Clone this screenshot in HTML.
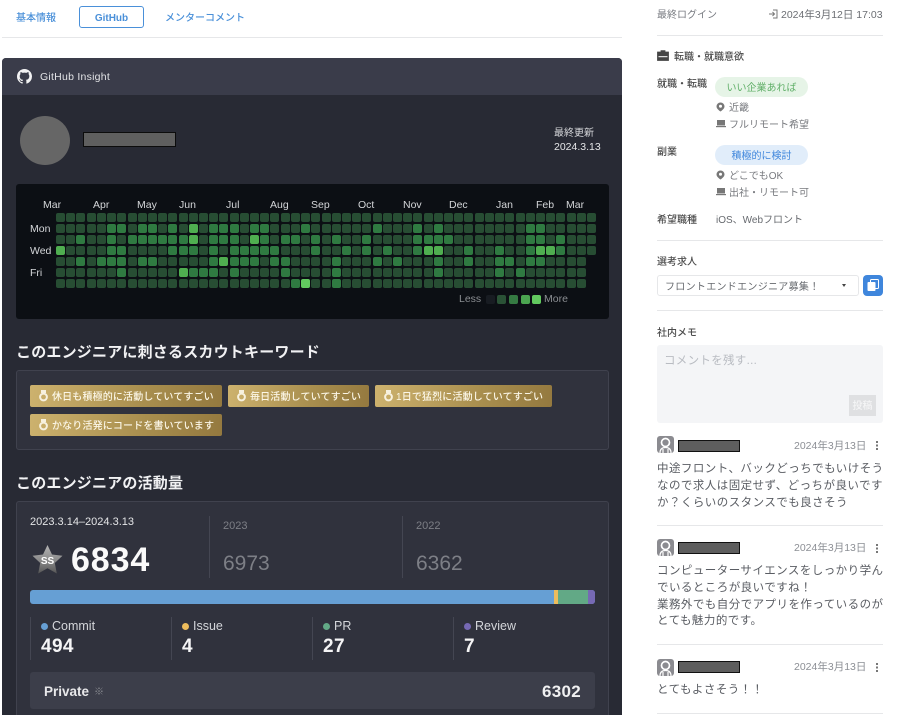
<!DOCTYPE html>
<html lang="ja">
<head>
<meta charset="utf-8">
<title>GitHub Insight</title>
<style>
html,body{margin:0;padding:0;background:#fff;}
body{width:902px;height:716px;position:relative;overflow:hidden;font-family:"Liberation Sans","Noto Sans CJK JP",sans-serif;color:#555;filter:blur(.3px);}
.a{position:absolute;white-space:nowrap;}
.hr{position:absolute;height:1px;background:#e6e7e9;}
.badge{position:absolute;height:22px;border-radius:2px;background:linear-gradient(100deg,#cdb26e,#a88e4e 60%,#94793f);color:#fbf6e6;font-size:10px;line-height:25px;letter-spacing:.15px;white-space:nowrap;font-weight:500;}
.badge svg{position:absolute;left:9px;top:5px;}
.badge span{position:absolute;left:22px;top:0;}
.cell{position:absolute;width:9px;height:9px;border-radius:2px;}
.mon{position:absolute;top:199px;font-size:10.5px;color:#d4d6d9;}
.day{position:absolute;left:30px;font-size:10.5px;color:#d4d6d9;}
.vl{position:absolute;width:1px;background:#444652;}
.dot{position:absolute;width:7px;height:7px;border-radius:50%;}
.lab{position:absolute;font-size:12.5px;color:#d4d6da;}
.num{position:absolute;font-size:19px;letter-spacing:.4px;font-weight:bold;color:#f5f5f6;line-height:20px;}
.av{position:absolute;left:657px;width:17px;height:17px;}
.red{position:absolute;left:678px;width:60px;height:10px;background:#5e5e5e;border:1px solid #111;box-sizing:content-box;}
.dt{position:absolute;left:794px;font-size:10.5px;color:#8c8f95;white-space:nowrap;}
.cm{position:absolute;left:657px;font-size:11.5px;line-height:16.8px;color:#5a5d63;letter-spacing:.45px;white-space:nowrap;}
.k{position:absolute;left:657px;font-size:10px;font-weight:500;color:#4c4c4c;white-space:nowrap;}
.s{position:absolute;left:729px;font-size:10px;color:#77797e;white-space:nowrap;}
.ic{position:absolute;left:716px;}
</style>
</head>
<body>
<!-- tabs -->
<div class="a" style="left:16px;top:9px;font-size:10px;color:#4a90d9;font-weight:500;">基本情報</div>
<div class="a" style="left:79px;top:6px;width:63px;height:20px;border:1px solid #4a90d9;border-radius:3px;text-align:center;line-height:23px;font-size:10px;font-weight:bold;color:#4a90d9;">GitHub</div>
<div class="a" style="left:165px;top:9px;font-size:10px;color:#4a90d9;font-weight:500;">メンターコメント</div>
<div class="hr" style="left:2px;top:37px;width:620px;"></div>

<!-- dark panel -->
<div class="a" style="left:2px;top:58px;width:620px;height:657px;background:#282a34;border-radius:4px 4px 0 0;"></div>
<div class="a" style="left:2px;top:58px;width:620px;height:37px;background:#3a3c4a;border-radius:4px 4px 0 0;"></div>
<svg class="a" style="left:17px;top:69px;" width="15" height="15" viewBox="0 0 16 16"><path fill="#f2f2f3" d="M8 0C3.58 0 0 3.58 0 8c0 3.54 2.29 6.53 5.47 7.59.4.07.55-.17.55-.38 0-.19-.01-.82-.01-1.49-2.01.37-2.53-.49-2.69-.94-.09-.23-.48-.94-.82-1.13-.28-.15-.68-.52-.01-.53.63-.01 1.08.58 1.23.82.72 1.21 1.87.87 2.33.66.07-.52.28-.87.51-1.07-1.78-.2-3.64-.89-3.64-3.95 0-.87.31-1.59.82-2.15-.08-.2-.36-1.02.08-2.12 0 0 .67-.21 2.2.82.64-.18 1.32-.27 2-.27s1.36.09 2 .27c1.53-1.04 2.2-.82 2.2-.82.44 1.1.16 1.92.08 2.12.51.56.82 1.27.82 2.15 0 3.07-1.87 3.75-3.65 3.95.29.25.54.73.54 1.48 0 1.07-.01 1.93-.01 2.2 0 .21.15.46.55.38A8.01 8.01 0 0016 8c0-4.42-3.58-8-8-8z"/></svg>
<div class="a" style="left:40px;top:71px;font-size:10.5px;color:#e2e3e6;letter-spacing:.25px;">GitHub Insight</div>

<div class="a" style="left:20px;top:116px;width:50px;height:49px;border-radius:50%;background:#666;"></div>
<div class="a" style="left:83px;top:132px;width:93px;height:15px;background:#5f5f5f;border:1px solid #0c0c0c;box-sizing:border-box;"></div>
<div class="a" style="left:554px;top:124px;font-size:10px;color:#d8d9dc;">最終更新</div>
<div class="a" style="left:554px;top:141px;font-size:10.5px;color:#e4e5e7;">2024.3.13</div>

<!-- heatmap -->
<div class="a" style="left:16px;top:184px;width:593px;height:135px;background:#0c0f14;border-radius:3px;"></div>
<div class="mon" style="left:43px;">Mar</div>
<div class="mon" style="left:93px;">Apr</div>
<div class="mon" style="left:137px;">May</div>
<div class="mon" style="left:179px;">Jun</div>
<div class="mon" style="left:226px;">Jul</div>
<div class="mon" style="left:270px;">Aug</div>
<div class="mon" style="left:311px;">Sep</div>
<div class="mon" style="left:358px;">Oct</div>
<div class="mon" style="left:403px;">Nov</div>
<div class="mon" style="left:449px;">Dec</div>
<div class="mon" style="left:496px;">Jan</div>
<div class="mon" style="left:536px;">Feb</div>
<div class="mon" style="left:566px;">Mar</div>
<div class="day" style="top:223px;">Mon</div>
<div class="day" style="top:245px;">Wed</div>
<div class="day" style="top:267px;">Fri</div>
<div id="hm"></div>
<div class="a" style="left:459px;top:293px;font-size:10.5px;color:#8b8e92;">Less</div>
<div class="cell" style="left:486px;top:295px;background:#181c22;"></div>
<div class="cell" style="left:497px;top:295px;background:#2a5236;"></div>
<div class="cell" style="left:509px;top:295px;background:#357a42;"></div>
<div class="cell" style="left:521px;top:295px;background:#4ba550;"></div>
<div class="cell" style="left:532px;top:295px;background:#62c95f;"></div>
<div class="a" style="left:544px;top:293px;font-size:10.5px;color:#8b8e92;">More</div>

<!-- keywords -->
<div class="a" style="left:16px;top:341px;font-size:15px;font-weight:bold;color:#f1f1f3;letter-spacing:.2px;">このエンジニアに刺さるスカウトキーワード</div>
<div class="a" style="left:16px;top:370px;width:593px;height:80px;background:#30323d;border:1px solid #40424e;border-radius:3px;box-sizing:border-box;"></div>
<div class="badge" style="left:30px;top:385px;width:192px;"><svg width="9" height="12" viewBox="0 0 9 12"><rect x="2" y="0" width="5" height="3" fill="#f7f1df"/><circle cx="4.5" cy="7" r="3.4" fill="none" stroke="#f7f1df" stroke-width="2"/></svg><span>休日も積極的に活動していてすごい</span></div>
<div class="badge" style="left:228px;top:385px;width:141px;"><svg width="9" height="12" viewBox="0 0 9 12"><rect x="2" y="0" width="5" height="3" fill="#f7f1df"/><circle cx="4.5" cy="7" r="3.4" fill="none" stroke="#f7f1df" stroke-width="2"/></svg><span>毎日活動していてすごい</span></div>
<div class="badge" style="left:375px;top:385px;width:177px;"><svg width="9" height="12" viewBox="0 0 9 12"><rect x="2" y="0" width="5" height="3" fill="#f7f1df"/><circle cx="4.5" cy="7" r="3.4" fill="none" stroke="#f7f1df" stroke-width="2"/></svg><span style="left:21px;">1日で猛烈に活動していてすごい</span></div>
<div class="badge" style="left:30px;top:414px;width:192px;"><svg width="9" height="12" viewBox="0 0 9 12"><rect x="2" y="0" width="5" height="3" fill="#f7f1df"/><circle cx="4.5" cy="7" r="3.4" fill="none" stroke="#f7f1df" stroke-width="2"/></svg><span>かなり活発にコードを書いています</span></div>

<!-- activity -->
<div class="a" style="left:16px;top:472px;font-size:15px;font-weight:bold;color:#f1f1f3;letter-spacing:.2px;">このエンジニアの活動量</div>
<div class="a" style="left:16px;top:501px;width:593px;height:214px;background:#30323d;border:1px solid #40424e;border-bottom:0;border-radius:3px 3px 0 0;box-sizing:border-box;"></div>
<div class="a" style="left:30px;top:516px;font-size:11px;color:#e4e5e7;">2023.3.14–2024.3.13</div>
<svg class="a" style="left:32px;top:544px;" width="31" height="30" viewBox="0 0 31 30"><defs><linearGradient id="g" x1="0" y1="0" x2="0" y2="1"><stop offset="0" stop-color="#b5b5b5"/><stop offset=".55" stop-color="#8a8a8a"/><stop offset="1" stop-color="#555"/></linearGradient></defs><polygon points="15.5,1 20,10.5 30.5,11.8 22.8,19 24.8,29.5 15.5,24.3 6.2,29.5 8.2,19 .5,11.8 11,10.5" fill="url(#g)"/><text x="15.5" y="20" text-anchor="middle" font-family="Liberation Sans" font-size="10" font-weight="bold" fill="#fff">SS</text></svg>
<div class="a" style="left:71px;top:542px;font-size:34px;line-height:36px;font-weight:bold;color:#fafafa;letter-spacing:.9px;">6834</div>
<div class="vl" style="left:209px;top:516px;height:62px;"></div>
<div class="a" style="left:223px;top:520px;font-size:11px;color:#7d7f86;">2023</div>
<div class="a" style="left:223px;top:551px;font-size:21px;line-height:25px;color:#7d7f86;">6973</div>
<div class="vl" style="left:402px;top:516px;height:62px;"></div>
<div class="a" style="left:416px;top:520px;font-size:11px;color:#7d7f86;">2022</div>
<div class="a" style="left:416px;top:551px;font-size:21px;line-height:25px;color:#7d7f86;">6362</div>

<div class="a" style="left:30px;top:590px;width:565px;height:14px;border-radius:3px;overflow:hidden;background:#669fd4;">
  <div class="a" style="left:524px;top:0;width:4px;height:14px;background:#edbc5c;"></div>
  <div class="a" style="left:528px;top:0;width:30px;height:14px;background:#62a986;"></div>
  <div class="a" style="left:558px;top:0;width:7px;height:14px;background:#7669b4;"></div>
</div>

<div class="vl" style="left:30px;top:617px;height:43px;"></div>
<div class="dot" style="left:41px;top:623px;background:#669fd4;"></div>
<div class="lab" style="left:52px;top:619px;">Commit</div>
<div class="num" style="left:41px;top:637px;">494</div>
<div class="vl" style="left:171px;top:617px;height:43px;"></div>
<div class="dot" style="left:182px;top:623px;background:#edbc5c;"></div>
<div class="lab" style="left:193px;top:619px;">Issue</div>
<div class="num" style="left:182px;top:637px;">4</div>
<div class="vl" style="left:312px;top:617px;height:43px;"></div>
<div class="dot" style="left:323px;top:623px;background:#62a986;"></div>
<div class="lab" style="left:334px;top:619px;">PR</div>
<div class="num" style="left:323px;top:637px;">27</div>
<div class="vl" style="left:453px;top:617px;height:43px;"></div>
<div class="dot" style="left:464px;top:623px;background:#7669b4;"></div>
<div class="lab" style="left:475px;top:619px;">Review</div>
<div class="num" style="left:464px;top:637px;">7</div>

<div class="a" style="left:30px;top:672px;width:565px;height:37px;background:#3c3e4a;border-radius:3px;"></div>
<div class="a" style="left:44px;top:684px;font-size:13.5px;font-weight:bold;color:#e8e8ea;">Private</div>
<div class="a" style="left:94px;top:683px;font-size:10px;color:#8a8c92;">※</div>
<div class="a" style="left:542px;top:682px;font-size:17px;letter-spacing:.3px;font-weight:bold;color:#f0f0f1;">6302</div>

<!-- right column -->
<div class="a" style="left:657px;top:6px;font-size:10px;color:#777a80;">最終ログイン</div>
<svg class="a" style="left:768px;top:9px;" width="10" height="10" viewBox="0 0 10 10"><path d="M5 1h4v8H5M1 5h5M4.5 3l2 2-2 2" fill="none" stroke="#777" stroke-width="1"/></svg>
<div class="a" style="left:781px;top:7px;font-size:10.5px;color:#6b6e73;">2024年3月12日 17:03</div>
<div class="hr" style="left:657px;top:35px;width:226px;"></div>

<svg class="a" style="left:657px;top:50px;" width="12" height="11" viewBox="0 0 12 11"><path d="M4 2V.7h4V2h3.500v8.500H.5V2zM1 5.500h10" fill="#444" stroke="#444" stroke-width=".8"/><rect x="1.500" y="6.200" width="9" height="1" fill="#fff"/></svg>
<div class="a" style="left:674px;top:48px;font-size:10px;font-weight:500;color:#4c4c4c;">転職・就職意欲</div>

<div class="k" style="top:75px;">就職・転職</div>
<div class="a" style="left:715px;top:77px;width:93px;height:20px;border-radius:10px;background:#e6f4e7;text-align:center;font-size:10px;line-height:23px;color:#62b06a;">いい企業あれば</div>
<svg class="ic" style="top:102px;" width="9" height="10" viewBox="0 0 9 10"><path d="M4.500 .5a4 4 0 014 4c0 2-2.500 4-4 5-1.500-1-4-3-4-5a4 4 0 014-4z" fill="#777"/><circle cx="4.500" cy="4.300" r="1.500" fill="#fff"/></svg>
<div class="s" style="top:99px;">近畿</div>
<svg class="ic" style="top:119px;" width="10" height="9" viewBox="0 0 10 9"><rect x="1" y="1" width="8" height="5.500" fill="#777"/><rect x="0" y="7" width="10" height="1.200" fill="#777"/></svg>
<div class="s" style="top:116px;">フルリモート希望</div>

<div class="k" style="top:143px;">副業</div>
<div class="a" style="left:715px;top:145px;width:93px;height:20px;border-radius:10px;background:#e1edfa;text-align:center;font-size:10px;line-height:23px;color:#3f86dc;">積極的に検討</div>
<svg class="ic" style="top:170px;" width="9" height="10" viewBox="0 0 9 10"><path d="M4.500 .5a4 4 0 014 4c0 2-2.500 4-4 5-1.500-1-4-3-4-5a4 4 0 014-4z" fill="#777"/><circle cx="4.500" cy="4.300" r="1.500" fill="#fff"/></svg>
<div class="s" style="top:167px;">どこでもOK</div>
<svg class="ic" style="top:187px;" width="10" height="9" viewBox="0 0 10 9"><rect x="1" y="1" width="8" height="5.500" fill="#777"/><rect x="0" y="7" width="10" height="1.200" fill="#777"/></svg>
<div class="s" style="top:184px;">出社・リモート可</div>

<div class="k" style="top:211px;">希望職種</div>
<div class="a" style="left:716px;top:211px;font-size:10px;color:#66696e;">iOS、Webフロント</div>
<div class="hr" style="left:657px;top:240px;width:226px;"></div>

<div class="k" style="top:253px;">選考求人</div>
<div class="a" style="left:657px;top:275px;width:202px;height:21px;border:1px solid #e6e7e9;border-radius:3px;background:#fff;box-sizing:border-box;"></div>
<div class="a" style="left:665px;top:278px;font-size:10px;color:#66696e;letter-spacing:.3px;">フロントエンドエンジニア募集！</div>
<div class="a" style="left:842px;top:284px;width:0;height:0;border-left:2.5px solid transparent;border-right:2.5px solid transparent;border-top:3px solid #444;"></div>
<div class="a" style="left:863px;top:275px;width:20px;height:21px;background:#3f86dc;border-radius:4px;"></div>
<svg class="a" style="left:867px;top:279px;" width="12" height="13" viewBox="0 0 12 13"><rect x="3.500" y=".5" width="8" height="9" rx="1" fill="none" stroke="#fff"/><rect x=".5" y="3" width="8" height="9" rx="1" fill="#fff"/></svg>
<div class="hr" style="left:657px;top:310px;width:226px;"></div>

<div class="k" style="top:324px;">社内メモ</div>
<div class="a" style="left:657px;top:345px;width:226px;height:78px;background:#f4f5f7;border-radius:3px;"></div>
<div class="a" style="left:664px;top:352px;font-size:11.5px;color:#b9bcc2;letter-spacing:.3px;">コメントを残す...</div>
<div class="a" style="left:849px;top:395px;width:27px;height:21px;background:#dfe0e2;text-align:center;line-height:23px;font-size:10px;color:#f5f5f6;font-weight:500;">投稿</div>

<svg class="av" style="top:436px;" viewBox="0 0 17 17"><rect width="17" height="17" rx="3" fill="#8b8b90"/><circle cx="8.500" cy="6.500" r="4" fill="none" stroke="#fff" stroke-width="1.700"/><path d="M3 17c0-4 2-5.500 5.500-5.500S14 13 14 17M6 13v4M11 13v4" fill="none" stroke="#fff" stroke-width="1.200"/></svg>
<div class="red" style="top:440px;"></div>
<div class="dt" style="top:438px;">2024年3月13日</div>
<div class="a" style="left:876px;top:441px;width:2px;height:2px;background:#777;box-shadow:0 3.5px 0 #777,0 7px 0 #777;"></div>
<div class="cm" style="top:461px;">中途フロント、バックどっちでもいけそう<br>なので求人は固定せず、どっちが良いです<br>か？くらいのスタンスでも良さそう</div>
<div class="hr" style="left:657px;top:525px;width:226px;"></div>

<svg class="av" style="top:539px;" viewBox="0 0 17 17"><rect width="17" height="17" rx="3" fill="#8b8b90"/><circle cx="8.500" cy="6.500" r="4" fill="none" stroke="#fff" stroke-width="1.700"/><path d="M3 17c0-4 2-5.500 5.500-5.500S14 13 14 17M6 13v4M11 13v4" fill="none" stroke="#fff" stroke-width="1.200"/></svg>
<div class="red" style="top:542px;"></div>
<div class="dt" style="top:540px;">2024年3月13日</div>
<div class="a" style="left:876px;top:544px;width:2px;height:2px;background:#777;box-shadow:0 3.5px 0 #777,0 7px 0 #777;"></div>
<div class="cm" style="top:563px;">コンピューターサイエンスをしっかり学ん<br>でいるところが良いですね！<br>業務外でも自分でアプリを作っているのが<br>とても魅力的です。</div>
<div class="hr" style="left:657px;top:644px;width:226px;"></div>

<svg class="av" style="top:659px;" viewBox="0 0 17 17"><rect width="17" height="17" rx="3" fill="#8b8b90"/><circle cx="8.500" cy="6.500" r="4" fill="none" stroke="#fff" stroke-width="1.700"/><path d="M3 17c0-4 2-5.500 5.500-5.500S14 13 14 17M6 13v4M11 13v4" fill="none" stroke="#fff" stroke-width="1.200"/></svg>
<div class="red" style="top:661px;"></div>
<div class="dt" style="top:659px;">2024年3月13日</div>
<div class="a" style="left:876px;top:663px;width:2px;height:2px;background:#777;box-shadow:0 3.5px 0 #777,0 7px 0 #777;"></div>
<div class="cm" style="top:682px;">とてもよさそう！！</div>
<div class="hr" style="left:657px;top:713px;width:226px;"></div>

<script>
(function(){
var d=[
{},
{5:2,6:2,8:2,9:2,11:2,13:3,15:2,16:2,17:2,19:2,20:2,24:2,31:2,35:2,37:2,46:2,47:2},
{2:2,5:2,7:2,8:2,9:2,10:2,11:2,12:2,13:3,15:2,16:2,17:2,19:3,20:2,22:2,23:2,25:2,27:2,30:2,35:2,36:2,37:2,38:2,46:2,47:2,49:2},
{0:3,5:2,6:2,11:2,12:2,13:2,15:2,17:2,18:2,19:2,20:2,21:2,25:2,28:2,30:2,32:2,35:2,36:3,37:3,40:2,43:2,46:2,47:3,48:3,49:2},
{2:2,4:2,5:2,6:2,8:2,9:2,15:2,16:3,17:2,18:2,19:2,21:2,22:2,27:2,31:2,33:2,37:2,40:2,43:2,44:2,46:2,47:2},
{6:2,12:3,13:2,14:2,15:2,17:2,22:2,27:2,37:2,43:2,45:2},
{23:2,24:4,27:2}
];
var c={1:"#274d33",2:"#2f7a41",3:"#4fae50",4:"#62c95f"},h="";
for(var r=0;r<7;r++){var n=r<4?53:52;for(var i=0;i<n;i++){var l=d[r][i]||1;
h+='<div class="cell" style="left:'+(56+i*10.21).toFixed(1)+'px;top:'+(213+r*11)+'px;background:'+c[l]+'"></div>';}}
document.getElementById("hm").innerHTML=h;
})();
</script>
</body>
</html>
